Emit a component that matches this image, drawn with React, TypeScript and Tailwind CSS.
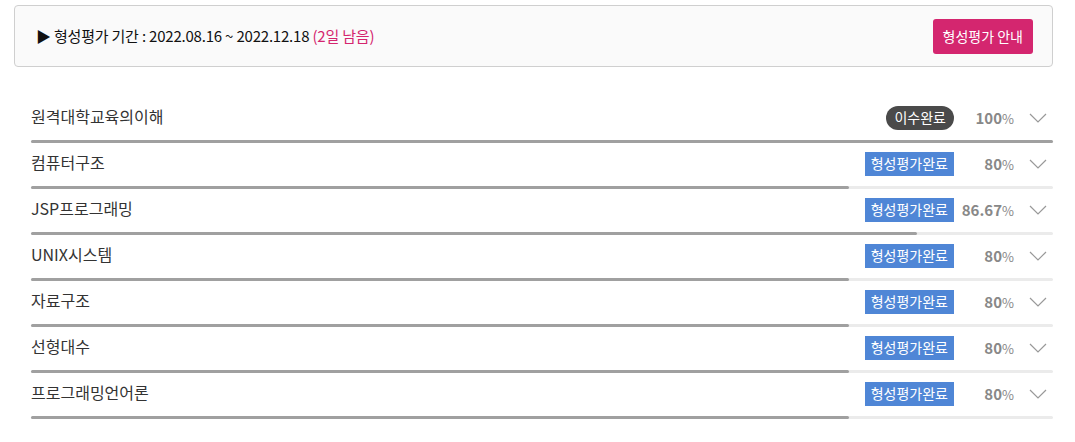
interface Course {
  name: string
  status: "done" | "eval"
  percent: string
  progress: number
}

const courses: Course[] = [
  { name: "원격대학교육의이해", status: "done", percent: "100", progress: 100 },
  { name: "컴퓨터구조", status: "eval", percent: "80", progress: 80 },
  { name: "JSP프로그래밍", status: "eval", percent: "86.67", progress: 86.67 },
  { name: "UNIX시스템", status: "eval", percent: "80", progress: 80 },
  { name: "자료구조", status: "eval", percent: "80", progress: 80 },
  { name: "선형대수", status: "eval", percent: "80", progress: 80 },
  { name: "프로그래밍언어론", status: "eval", percent: "80", progress: 80 },
]

const font = { fontFamily: '"Noto Sans CJK KR", "Noto Sans", sans-serif' }

function Chevron() {
  return (
    <svg width="18" height="10" viewBox="0 0 18 10" className="ml-[15px] mr-[6px]">
      <polyline points="1,1 9,9 17,1" fill="none" stroke="#999" strokeWidth="1.2" />
    </svg>
  )
}

function CourseRow({ course }: { course: Course }) {
  return (
    <div>
      <div className="flex h-[43px] items-center pb-[2px]">
        <span className="mb-[3px] flex-1 text-[16px] text-[#333]">{course.name}</span>
        {course.status === "done" ? (
          <span className="flex h-[24px] items-center rounded-full bg-[#4a4a4a] px-[8px] text-[14px] text-white">
            이수완료
          </span>
        ) : (
          <span className="flex h-[24px] items-center bg-[#4f86d6] px-[6px] text-[14px] text-white">
            형성평가완료
          </span>
        )}
        <span className="w-[60px] text-right text-[#888]">
          <span className="text-[15px] font-bold">{course.percent}</span>
          <span className="text-[13px]">%</span>
        </span>
        <Chevron />
      </div>
      <div className="h-[3px] rounded-full bg-[#ebebeb]">
        <div className="h-full rounded-full bg-[#a0a0a0]" style={{ width: `${course.progress}%` }} />
      </div>
    </div>
  )
}

export default function App() {
  return (
    <div className="bg-white pl-[14px] pr-[22px] pt-[5px]" style={font}>
      {/* Period header */}
      <div className="flex h-[62px] items-center justify-between rounded-[4px] border border-[#cfcfcf] bg-[#fafafa] pl-[21px] pr-[19px]">
        <p className="text-[15px] tracking-[-0.2px] text-[#111]">
          ▶ 형성평가 기간 : 2022.08.16 ~ 2022.12.18 <span className="text-[#d4256e]">(2일 남음)</span>
        </p>
        <button className="h-[35px] rounded-[3px] bg-[#d4266f] px-[10px] text-[14px] text-white">
          형성평가 안내
        </button>
      </div>

      {/* Course list */}
      <div className="mt-[30px] pl-[17px]">
        {courses.map((c) => (
          <CourseRow key={c.name} course={c} />
        ))}
      </div>
    </div>
  )
}
